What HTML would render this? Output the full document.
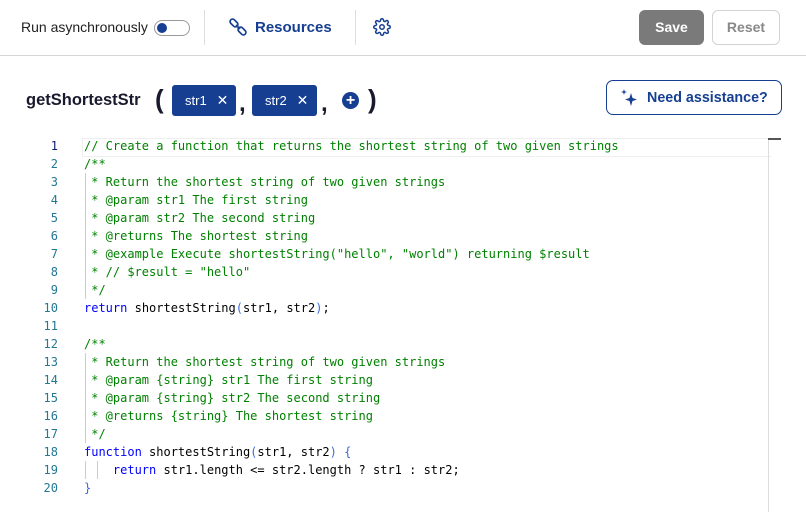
<!DOCTYPE html>
<html><head><style>
body{margin:0;width:806px;height:512px;background:#fff;font-family:"Liberation Sans",sans-serif;position:relative;overflow:hidden}
.a{position:absolute}
.top{left:0;top:0;width:806px;height:55px;border-bottom:1px solid #d6d6d6}
.code{font-family:"DejaVu Sans Mono",monospace;font-size:12px;white-space:pre}
.ln{position:absolute;left:30px;width:28px;text-align:right;color:#237893;font-family:"DejaVu Sans Mono",monospace;font-size:12px}
.c{color:#008000}.k{color:#0000ff}.t{color:#000}.p{color:#3b6be0}
.chip{position:absolute;top:85px;height:31px;background:#163f91;border-radius:3px;color:#fff;font-size:13px;line-height:31px}
</style></head><body>
<div class="a top"></div>
<div class="a" style="left:21px;top:19px;font-size:14px;color:#222">Run asynchronously</div>
<div class="a" style="left:154px;top:20px;width:34px;height:14px;border:1px solid #999;border-radius:9px"></div>
<div class="a" style="left:157px;top:23px;width:10px;height:10px;border-radius:50%;background:#163f91"></div>
<div class="a" style="left:204px;top:10px;width:1px;height:35px;background:#ddd"></div>
<svg class="a" style="left:229px;top:18px" width="18" height="18" viewBox="0 0 18 18" fill="none" stroke="#163f91" stroke-width="1.7"><rect x="0.5" y="2.5" width="9" height="5" rx="2.5" transform="rotate(45 5 5)"/><rect x="8.5" y="10.5" width="9" height="5" rx="2.5" transform="rotate(45 13 13)"/><path d="M7 7 L11 11"/></svg>
<div class="a" style="left:255px;top:19px;font-size:15px;font-weight:bold;color:#163f91">Resources</div>
<div class="a" style="left:355px;top:10px;width:1px;height:35px;background:#ddd"></div>
<svg class="a" style="left:373px;top:18px" width="18" height="18" viewBox="0 0 24 24" fill="none" stroke="#163f91" stroke-width="2"><circle cx="12" cy="12" r="3"/><path d="M19.4 15a1.7 1.7 0 0 0 .3 1.8l.1.1a2 2 0 1 1-2.8 2.8l-.1-.1a1.7 1.7 0 0 0-1.8-.3 1.7 1.7 0 0 0-1 1.5V21a2 2 0 1 1-4 0v-.1a1.7 1.7 0 0 0-1.1-1.5 1.7 1.7 0 0 0-1.8.3l-.1.1a2 2 0 1 1-2.8-2.8l.1-.1a1.7 1.7 0 0 0 .3-1.8 1.7 1.7 0 0 0-1.5-1H3a2 2 0 1 1 0-4h.1a1.7 1.7 0 0 0 1.5-1.1 1.7 1.7 0 0 0-.3-1.8l-.1-.1a2 2 0 1 1 2.8-2.8l.1.1a1.7 1.7 0 0 0 1.8.3H9a1.7 1.7 0 0 0 1-1.5V3a2 2 0 1 1 4 0v.1a1.7 1.7 0 0 0 1 1.5 1.7 1.7 0 0 0 1.8-.3l.1-.1a2 2 0 1 1 2.8 2.8l-.1.1a1.7 1.7 0 0 0-.3 1.8V9a1.7 1.7 0 0 0 1.5 1H21a2 2 0 1 1 0 4h-.1a1.7 1.7 0 0 0-1.5 1z"/></svg>
<div class="a" style="left:639px;top:10px;width:65px;height:35px;background:#7a7a7a;border-radius:6px;color:#fff;font-size:14px;font-weight:bold;text-align:center;line-height:35px">Save</div>
<div class="a" style="left:712px;top:10px;width:66px;height:33px;border:1.5px solid #d3d3d3;border-radius:6px;color:#888;font-size:14px;font-weight:bold;text-align:center;line-height:33px">Reset</div>

<div class="a" style="left:26px;top:91px;font-size:16.5px;font-weight:bold;color:#1a1a2e">getShortestStr</div>
<div class="a" style="left:155px;top:84px;font-size:26px;font-weight:bold;color:#1a1a2e">(</div>
<div class="chip" style="left:172px;width:64px"><span style="margin-left:13px">str1</span><span style="margin-left:10px;font-size:14px">✕</span></div>
<div class="a" style="left:239px;top:90px;font-size:24px;font-weight:bold;color:#1a1a2e">,</div>
<div class="chip" style="left:252px;width:65px"><span style="margin-left:13px">str2</span><span style="margin-left:10px;font-size:14px">✕</span></div>
<div class="a" style="left:321px;top:90px;font-size:24px;font-weight:bold;color:#1a1a2e">,</div>
<div class="a" style="left:342px;top:92px;width:17px;height:17px;border-radius:50%;background:#163f91;color:#fff;font-size:16px;font-weight:bold;text-align:center;line-height:17px">+</div>
<div class="a" style="left:368px;top:84px;font-size:26px;font-weight:bold;color:#1a1a2e">)</div>

<div class="a" style="left:606px;top:80px;width:174px;height:33px;border:1.5px solid #163f91;border-radius:7px"></div>
<svg class="a" style="left:620px;top:88px" width="20" height="20" viewBox="0 0 20 20" fill="#163f91"><path d="M11 5 L12.5 10 L17 11.5 L12.5 13 L11 18 L9.5 13 L5 11.5 L9.5 10Z"/><path d="M4 1 L4.7 3.3 L7 4 L4.7 4.7 L4 7 L3.3 4.7 L1 4 L3.3 3.3Z"/></svg>
<div class="a" style="left:647px;top:90px;font-size:14.3px;font-weight:bold;color:#163f91">Need assistance?</div>

<div class="a" style="left:82px;top:138px;width:688px;height:17px;border:1px solid #eee;border-right:none;background:#fff"></div>
<div class="a" style="left:768px;top:138px;width:1px;height:374px;background:#ddd"></div>
<div class="a" style="left:768px;top:138px;width:13px;height:2px;background:#555"></div>
<div class="a" style="left:85px;top:173px;width:1px;height:126px;background:#ccc"></div>
<div class="a" style="left:85px;top:353px;width:1px;height:90px;background:#ccc"></div>
<div class="a" style="left:85px;top:461px;width:1px;height:18px;background:#ccc"></div>
<div class="a" style="left:97px;top:461px;width:1px;height:18px;background:#ccc"></div>

<div class="a" style="left:0;top:137px;width:760px">
<div style="position:relative;line-height:18px">
<div class="ln" style="top:0;color:#0b216f">1</div><div class="ln" style="top:18px">2</div><div class="ln" style="top:36px">3</div><div class="ln" style="top:54px">4</div><div class="ln" style="top:72px">5</div><div class="ln" style="top:90px">6</div><div class="ln" style="top:108px">7</div><div class="ln" style="top:126px">8</div><div class="ln" style="top:144px">9</div><div class="ln" style="top:162px">10</div><div class="ln" style="top:180px">11</div><div class="ln" style="top:198px">12</div><div class="ln" style="top:216px">13</div><div class="ln" style="top:234px">14</div><div class="ln" style="top:252px">15</div><div class="ln" style="top:270px">16</div><div class="ln" style="top:288px">17</div><div class="ln" style="top:306px">18</div><div class="ln" style="top:324px">19</div><div class="ln" style="top:342px">20</div>
<div class="code" style="position:absolute;left:84px;top:0;line-height:18px"><span class="c">// Create a function that returns the shortest string of two given strings
/**
 * Return the shortest string of two given strings
 * @param str1 The first string
 * @param str2 The second string
 * @returns The shortest string
 * @example Execute shortestString("hello", "world") returning $result
 * // $result = "hello"
 */</span>
<span class="k">return</span> <span class="t">shortestString</span><span class="p">(</span>str1, str2<span class="p">)</span>;

<span class="c">/**
 * Return the shortest string of two given strings
 * @param {string} str1 The first string
 * @param {string} str2 The second string
 * @returns {string} The shortest string
 */</span>
<span class="k">function</span> shortestString<span class="p">(</span>str1, str2<span class="p">)</span> <span class="p">{</span>
    <span class="k">return</span> str1.length &lt;= str2.length ? str1 : str2;
<span class="p">}</span></div>
</div></div>
</body></html>
